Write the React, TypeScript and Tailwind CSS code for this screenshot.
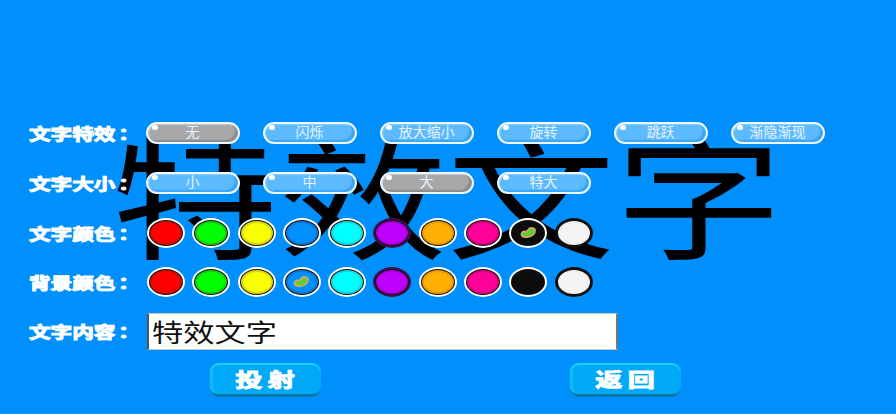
import React from 'react';

const effects = ['无', '闪烁', '放大缩小', '旋转', '跳跃', '渐隐渐现'];
const sizes = ['小', '中', '大', '特大'];

// fill, darker rim, outer ring
const swatches = [
  { fill: 'bg-[#ff0000]', rim: 'border-[#d80808]', ring: 'border-white' },
  { fill: 'bg-[#00ff00]', rim: 'border-[#10d010]', ring: 'border-white' },
  { fill: 'bg-[#f8ff00]', rim: 'border-[#d8d810]', ring: 'border-white' },
  { fill: 'bg-[#0090ff]', rim: 'border-[#0a78d8]', ring: 'border-white' },
  { fill: 'bg-[#00ffff]', rim: 'border-[#10d8e0]', ring: 'border-white' },
  { fill: 'bg-[#c000ff]', rim: 'border-[#a800d8]', ring: 'border-[#401050]' },
  { fill: 'bg-[#ffb000]', rim: 'border-[#e89c00]', ring: 'border-white' },
  { fill: 'bg-[#ff0098]', rim: 'border-[#d80080]', ring: 'border-white' },
  { fill: 'bg-[#0c0c0c]', rim: 'border-[#0c0c0c]', ring: 'border-white' },
  { fill: 'bg-[#f4f4f4]', rim: 'border-[#f0f0f0]', ring: 'border-[#101010]' },
];

const Bean = () => (
  <svg width="17" height="13" viewBox="0 0 17 13">
    <path d="M1.5 8.5c0-2.5 2-3.5 3.5-3s2.500-1 4-2.500 6-1.500 6 1.500-2.500 5-5 6-8.500 1-8.500-2z" fill="#58d030" stroke="#d0a868" strokeWidth="1.800" />
  </svg>
);

const Label = ({ text }: { text: string }) => (
  <div className="w-[116.5px] shrink-0">
    <span className="inline-block origin-left scale-x-[1.35] text-[16px] leading-[18px] font-bold text-white whitespace-nowrap [-webkit-text-stroke:1px_white]">
      {text}
      <span className="-ml-[2px] font-['Noto_Sans_CJK_TC']">：</span>
    </span>
  </div>
);

const Pill = ({ text, active }: { text: string; active?: boolean }) => (
  <button
    className={`relative w-[94px] h-[22px] shrink-0 rounded-full border-2 border-[#eef6ff] text-[14px] leading-[15px] pb-[3px] text-center text-[#e8f4ff] ${
      active
        ? 'bg-[#a8a8a8] shadow-[inset_-3px_-2px_1px_#8c8c8c,inset_1px_1px_1px_#c8c8c8]'
        : 'bg-[#5cbaff] shadow-[inset_-3px_-2px_1px_#3aa6f8,inset_1px_1px_1px_#8cd0ff]'
    }`}
  >
    <span className="absolute left-[4px] top-[1px] w-[6px] h-[5px] rounded-full bg-white" />
    {text}
  </button>
);

const Swatch = ({ s, selected }: { s: (typeof swatches)[number]; selected?: boolean }) => (
  <div className={`w-[38px] h-[30px] shrink-0 rounded-[50%] border-2 ${s.ring} bg-[#101010] p-[1px]`}>
    <div className={`w-full h-full rounded-[50%] border-2 ${s.fill} ${s.rim} flex items-center justify-center`}>
      {selected && <Bean />}
    </div>
  </div>
);

const ActionButton = ({ text }: { text: string }) => (
  <button className="w-[111px] h-[34px] rounded-[9px] border-b-[3px] border-[#0878a8] bg-[#00a8f8] shadow-[inset_0_2px_0_#18d0f8,inset_3px_0_2px_#10c0f4] text-[19px] leading-[26px] font-bold text-white [-webkit-text-stroke:1px_white]">
    <span className="inline-block scale-x-[1.42] tracking-[4px] pl-[4px]">{text}</span>
  </button>
);

export default function App() {
  return (
    <div
      className="relative w-[896px] h-[414px] overflow-hidden bg-[#0090fe] border-b border-[#14a0ff] pt-[108px]"
      style={{ fontFamily: '"Noto Sans CJK SC", "Noto Sans", sans-serif' }}
    >
      <div className="absolute left-[111px] top-[110px] text-[168px] leading-[198px] text-black whitespace-nowrap origin-top-left scale-y-[0.81]">
        特效文字
      </div>

      <div className="relative pl-[29px]">
        <div className="flex items-center h-[50px]">
          <Label text="文字特效" />
          <div className="flex gap-[23px]">
            {effects.map((t, i) => (
              <Pill key={t} text={t} active={i === 0} />
            ))}
          </div>
        </div>
        <div className="flex items-center h-[50px]">
          <Label text="文字大小" />
          <div className="flex gap-[23px]">
            {sizes.map((t, i) => (
              <Pill key={t} text={t} active={i === 2} />
            ))}
          </div>
        </div>
        <div className="flex items-center h-[49px]">
          <Label text="文字颜色" />
          <div className="flex gap-[7.3px] pl-[1.500px]">
            {swatches.map((s, i) => (
              <Swatch key={i} s={s} selected={i === 8} />
            ))}
          </div>
        </div>
        <div className="flex items-center h-[49px]">
          <Label text="背景颜色" />
          <div className="flex gap-[7.3px] pl-[1.500px]">
            {swatches.map((s, i) => (
              <Swatch key={i} s={s} selected={i === 3} />
            ))}
          </div>
        </div>
        <div className="flex items-center h-[50px]">
          <Label text="文字内容" />
          <div className="ml-[1px] w-[471px] h-[37px] bg-white border-l-2 border-r-2 border-t border-b border-l-[#555555] border-r-[#777777] border-t-[#c8c8c8] border-b-[#c8c8c8] pl-[3px]">
            <span className="inline-block origin-left scale-x-[1.25] text-[25px] leading-[34px] text-[#111111]">
              特效文字
            </span>
          </div>
        </div>
        <div className="flex gap-[249px] pl-[181px] pt-[7px]">
          <ActionButton text="投射" />
          <ActionButton text="返回" />
        </div>
      </div>
    </div>
  );
}
